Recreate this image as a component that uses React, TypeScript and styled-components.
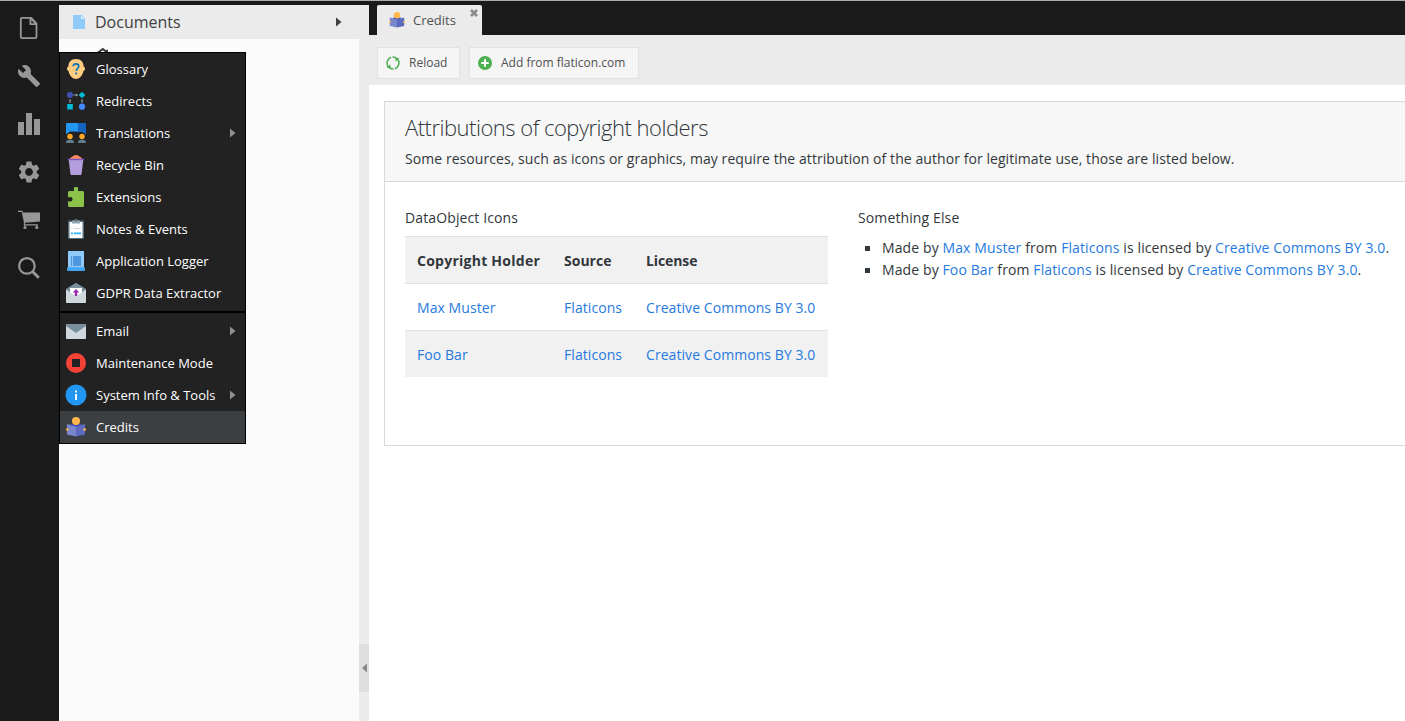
import React from 'react';
import styled, { createGlobalStyle } from 'styled-components';
import { MdSettings, MdBuild } from 'react-icons/md';

const GlobalStyle = createGlobalStyle`
  * { box-sizing: border-box; }
  html, body { margin: 0; padding: 0; overflow: hidden; }
  body { font-family: 'Open Sans', 'Noto Sans', sans-serif; background: #fff; }
  svg { display: block; flex: none; }
`;

const Shell = styled.div`
  display: flex;
  width: 1405px;
  height: 721px;
  border-top: 1px solid #a9afac;
  background: #1a1a1a;
  overflow: hidden;
`;

const Rail = styled.nav`
  flex: none;
  width: 59px;
  display: flex;
  flex-direction: column;
  align-items: flex-start;
  padding-top: 3px;
  background: #1a1a1a;
`;

const RailItem = styled.div<{ $lift?: number }>`
  height: 48px;
  width: 58px;
  display: flex;
  align-items: center;
  justify-content: center;
  padding-bottom: ${(p) => p.$lift ?? 0}px;
  color: #979797;
`;

const TreePanel = styled.aside`
  position: relative;
  flex: none;
  width: 310px;
  display: flex;
  flex-direction: column;
  padding-top: 4px;
`;

const TreeHeader = styled.header`
  height: 34px;
  display: flex;
  align-items: center;
  padding: 0 27px 0 13px;
  background: #ebebeb;
  color: #404040;
  font-size: 16px;
`;

const TreeTitle = styled.span`
  flex: 1;
  margin-left: 9px;
  line-height: 34px;
`;

const TreeRow = styled.div`
  flex: 1;
  display: flex;
`;

const TreeBody = styled.div`
  flex: 1;
  padding: 8px 0 0 36px;
  background: #fbfbfb;
`;

const Splitter = styled.div`
  width: 10px;
  padding-top: 605px;
  background: #ebebeb;
`;

const SplitHandle = styled.div`
  height: 48px;
  display: flex;
  align-items: center;
  padding-left: 3px;
  background: #dedede;
`;

const Menu = styled.div`
  position: absolute;
  left: 0;
  top: 51px;
  width: 187px;
  border: 1px solid #000;
  background: #222;
`;

const MenuItem = styled.div<{ $active?: boolean }>`
  height: 32px;
  display: flex;
  align-items: center;
  padding: 0 9px 0 6px;
  background: ${(p) => (p.$active ? '#3c3f42' : 'transparent')};
  color: #fff;
  font-size: 13px;
`;

const MenuLabel = styled.span`
  flex: 1;
  margin-left: 10px;
  line-height: 32px;
  white-space: nowrap;
`;

const MenuDivider = styled.div`
  height: 2px;
  margin: 2px 0;
  background: #000;
`;

const Main = styled.main`
  flex: 1;
  min-width: 0;
  display: flex;
  flex-direction: column;
  background: #fff;
`;

const TabBar = styled.div`
  height: 34px;
  padding: 4px 0 0 8px;
  background: #1a1a1a;
`;

const Tab = styled.div`
  position: relative;
  width: 105px;
  height: 30px;
  display: flex;
  align-items: center;
  padding-left: 12px;
  border-radius: 2px 2px 0 0;
  background: #ebebeb;
  color: #505050;
  font-size: 13px;
`;

const TabLabel = styled.span`
  margin-left: 8px;
  line-height: 30px;
`;

const TabClose = styled.span`
  position: absolute;
  right: 4px;
  top: 4px;
`;

const Toolbar = styled.div`
  height: 50px;
  display: flex;
  gap: 9px;
  padding: 12px 8px 0;
  background: #ebebeb;
`;

const ToolButton = styled.button<{ $width: number }>`
  width: ${(p) => p.$width}px;
  height: 32px;
  display: flex;
  align-items: center;
  padding: 0 0 0 8px;
  border: 1px solid #e1e1e1;
  background: #f5f5f5;
  color: #505050;
  font: 12px/30px 'Open Sans', sans-serif;
  white-space: nowrap;
`;

const ToolLabel = styled.span`
  margin-left: 9px;
`;

const Card = styled.section`
  height: 345px;
  margin: 16px 0 0 15px;
  border: 1px solid #d9d9d9;
  border-right: 0;
  color: #32373c;
  font-family: 'Open Sans', 'Noto Sans', sans-serif;
  font-size: 14px;
  letter-spacing: 0.067px;
`;

const CardHeader = styled.header`
  height: 80px;
  padding: 9px 20px 0;
  border-bottom: 1px solid #d9d9d9;
  background: #f7f7f7;
`;

const Title = styled.h1`
  margin: 0;
  font-size: 22px;
  font-weight: 300;
  line-height: 32px;
  letter-spacing: -0.5px;
`;

const Lead = styled.p`
  margin: 5px 0 0;
  line-height: 22px;
  white-space: nowrap;
`;

const Columns = styled.div`
  display: flex;
  gap: 30px;
  padding: 25px 0 0 20px;
`;

const Heading = styled.h2`
  margin: 0;
  font-size: 14px;
  font-weight: 400;
  line-height: 22px;
  letter-spacing: 0.12px;
`;

const Table = styled.div`
  width: 423px;
  margin-top: 7px;
`;

const Row = styled.div<{ $shade?: boolean; $bold?: boolean }>`
  height: 47px;
  display: grid;
  grid-template-columns: 147px 82px 1fr;
  padding-left: 12px;
  border-top: 1px solid #dee2e6;
  background: ${(p) => (p.$shade ? '#f1f1f1' : '#fff')};
  font-weight: ${(p) => (p.$bold ? 700 : 400)};
  line-height: 47px;
  white-space: nowrap;
`;

const HeadCell = styled.span<{ $track: number }>`
  letter-spacing: ${(p) => p.$track}px;
`;

const Link = styled.a`
  color: #267ae0;
`;

const List = styled.ul`
  margin: 7px 0 0;
  padding: 0;
  list-style: none;
  letter-spacing: 0.11px;
`;

const ListItem = styled.li`
  display: flex;
  align-items: center;
  height: 22px;
  white-space: pre;
`;

const Bullet = styled.span`
  width: 5px;
  height: 5px;
  margin: 3px 12px 0 7px;
  background: #32373c;
`;

const CaretRight = ({ color }: { color: string }) => (
  <svg width="6" height="10" viewBox="0 0 6 10"><path d="M0 0.5L5.5 5L0 9.5z" fill={color} /></svg>
);

const FileIcon = () => (
  <svg width="20" height="24" viewBox="0 0 20 24" fill="none" stroke="currentColor" strokeWidth="1.8">
    <path d="M3 1.9h9.2l5.3 5.6v13.4a1.2 1.2 0 0 1-1.2 1.2H3a1.2 1.2 0 0 1-1.2-1.2V3.1A1.2 1.2 0 0 1 3 1.9z" />
    <path d="M11.4 2v6.2h6.2M11.5 2l6 6.2" />
  </svg>
);

const ChartIcon = () => (
  <svg width="22" height="22" viewBox="0 0 22 22" fill="currentColor">
    <path d="M0 9h6v13H0zM8 0h6v22H8zM16 6h6v16h-6z" />
  </svg>
);

const CartIcon = () => (
  <svg width="22" height="20" viewBox="0 0 22 20" fill="currentColor">
    <path d="M4.5 2.4H22v9L7 12.7v1.6h13v1.2H5.8V11.8L3.7 2H0V.7h4.7z" />
    <path d="M6.8 15v1.5M19 15v1.5" stroke="currentColor" />
    <circle cx="7" cy="17.5" r="1.6" /><circle cx="18.8" cy="17.5" r="1.6" />
  </svg>
);

const SearchIcon = () => (
  <svg width="22" height="22" viewBox="0 0 22 22" fill="none" stroke="currentColor">
    <circle cx="8.9" cy="8.9" r="7.8" strokeWidth="2.2" />
    <path d="M14.5 14.5l6.3 6.3" strokeWidth="3" />
  </svg>
);

const DocIcon = () => (
  <svg width="14" height="16" viewBox="0 0 14 16">
    <path d="M1 1h8.500L13 4.500V15H1z" fill="#90caf9" /><path d="M9 1.700V5h3.300z" fill="#e1f5fe" />
  </svg>
);

const HomeTip = () => (
  <svg width="16" height="12" viewBox="0 0 16 12" fill="none" stroke="#333" strokeWidth="1.8">
    <path d="M2.500 6L7.800 2l5.500 4.500M12 2.800v3.500" />
  </svg>
);

const ReadIcon = ({ size }: { size: number }) => (
  <svg width={size} height={size} viewBox="0 0 20 20">
    <path d="M1 7l9 2.300v10.200L1 17.400z" fill="#7986cb" />
    <path d="M19 7l-9 2.300v10.200l9-2.100z" fill="#5c6bc0" />
    <path d="M5 7h10v1.200l-5 1.500-5-1.500z" fill="#3f51b5" />
    <circle cx="10" cy="4" r="4" fill="#ffb74d" />
    <circle cx="1.300" cy="12.600" r="1.300" fill="#ffb74d" /><circle cx="18.700" cy="12.600" r="1.300" fill="#ffb74d" />
  </svg>
);

const icon = (children: React.ReactNode) => (
  <svg width="20" height="20" viewBox="0 0 20 20">{children}</svg>
);

const GlossaryIcon = icon(<>
  <path d="M10 0c5 0 7.700 3.200 7.700 7.800.8.1 1.300.7 1.300 1.700 0 1.400-.6 2.300-1.600 2.600C16.700 16.200 14 20 10 20s-6.700-3.800-7.400-7.900C1.600 11.800 1 10.900 1 9.500c0-1 .5-1.600 1.300-1.700C2.300 3.200 5 0 10 0z" fill="#ffcc80" />
  <path d="M7.200 7.300C7.300 5.600 8.500 4.900 10 4.900c1.700 0 2.800.9 2.800 2.400 0 1.900-2.500 2.100-2.500 4.600" fill="none" stroke="#0277bd" strokeWidth="1.700" />
  <path d="M9.300 13.500h1.900v1.900H9.300z" fill="#0277bd" />
</>);

const RedirectIcon = icon(<>
  <path d="M7.500 4h3.500M4 10.500V12M16 10.500V12" stroke="#90a4ae" />
  <path d="M10 2.500L12.200 4 10 5.500zM2.700 10.300L4 8l1.300 2.300zM14.700 10.300L16 8l1.300 2.300z" fill="#90a4ae" />
  <circle cx="4" cy="4" r="3" fill="#3f51b5" />
  <path d="M16 .7L19.300 4 16 7.300 12.700 4z" fill="#00bcd4" />
  <path d="M1.200 13h5.600v5.500H1.200z" fill="#00bcd4" />
  <circle cx="16" cy="15.700" r="3.100" fill="#448aff" />
</>);

const TranslationIcon = icon(<>
  <path d="M10 0h9a1 1 0 0 1 1 1v10.500L16.500 9H10z" fill="#1565c0" />
  <path d="M1 0h10a1 1 0 0 1 1 1v6.500a1 1 0 0 1-1 1H4L0 11.500V1a1 1 0 0 1 1-1z" fill="#2196f3" />
  <circle cx="4" cy="13.500" r="2.700" fill="#ffa726" /><circle cx="16" cy="13.500" r="2.700" fill="#ffa726" />
  <path d="M0 20c0-3 2-3.200 4-3.200S8 17 8 20zM12 20c0-3 2-3.200 4-3.200s4 .2 4 3.200z" fill="#607d8b" />
</>);

const BinIcon = icon(<>
  <path d="M4 4.200c0-2 2-1.400 2.600-2.600C7.500 0 9 1 10 0c1.500-.3 2 .8 3.200 1.300 1 .5 2.800.9 2.800 2.900z" fill="#ff8a65" />
  <path d="M2.700 5h14.600L15.500 19.300a1 1 0 0 1-1 .7h-9a1 1 0 0 1-1-.7z" fill="#b39ddb" />
  <path d="M2 3.700h16v1.500H2z" fill="#7e57c2" />
</>);

const PuzzleIcon = icon(
  <path d="M2 5.500A1.500 1.500 0 0 1 3.500 4h4.300c.6-.6 0-1.100 0-2a2.200 2.200 0 0 1 4.400 0c0 .9-.6 1.400 0 2h4.300A1.500 1.500 0 0 1 18 5.500v13a1.500 1.500 0 0 1-1.500 1.500h-13A1.500 1.500 0 0 1 2 18.500v-4c.6-.6 1.200 0 2.300 0a2.300 2.300 0 0 0 0-4.600c-1.100 0-1.700.6-2.300 0z" fill="#8bc34a" />
);

const NotesIcon = icon(<>
  <rect x="2" y="1.500" width="16" height="18.500" rx="1.300" fill="#546e7a" />
  <path d="M3.500 3h13v16h-13z" fill="#fff" />
  <path d="M6 1.500h2.200a1.900 1.900 0 0 1 3.600 0H14v3H6z" fill="#90a4ae" /><circle cx="10" cy="1.600" r=".8" fill="#37474f" />
  <path d="M5 9h1.500v1H5zM8 9h7v1H8z" fill="#cfd8dc" /><path d="M5 13.500h2v1.700H5zM8 13.500h7v1.700H8z" fill="#29b6f6" />
</>);

const LoggerIcon = icon(<>
  <path d="M2 0h16v17H2z" fill="#90caf9" />
  <path d="M5 5h1v10H5zM7 5h8v10H7z" fill="#4f97df" />
  <rect x="1" y="16.200" width="18" height="3.800" rx="1" fill="#42a5f5" />
</>);

const ExtractIcon = icon(<>
  <path d="M0 6L10-.2 20 6v4H0z" fill="#78909c" />
  <path d="M4 5h12v9H4z" fill="#fff" />
  <path d="M0 6.500l10 7 10-7V19a1 1 0 0 1-1 1H1a1 1 0 0 1-1-1z" fill="#cfd8dc" />
  <path d="M10 6l3.200 3.500h-2V13H8.800V9.500h-2z" fill="#9c27b0" />
</>);

const MailIcon = icon(<>
  <rect x="0" y="3" width="20" height="15" rx="1" fill="#cfd8dc" />
  <path d="M0 4a1 1 0 0 1 1-1h18a1 1 0 0 1 1 1v1l-10 7L0 5z" fill="#78909c" />
</>);

const StopIcon = icon(<>
  <circle cx="10" cy="10" r="10" fill="#f44336" /><rect x="6" y="6" width="8" height="8" rx=".5" fill="#222" />
</>);

const WideIcon = styled.svg`
  margin: 0 -1px;
`;

const InfoIcon = (
  <WideIcon width="22" height="22" viewBox="-1 -1 22 22">
    <circle cx="10" cy="10" r="10.500" fill="#2196f3" /><path d="M9.100 9h1.900v6H9.100zM9.100 5.500h1.900v1.900H9.100z" fill="#fff" />
  </WideIcon>
);

const ReloadIcon = () => (
  <svg width="14" height="14" viewBox="0 0 14 14" fill="none" stroke="#4caf50" strokeWidth="1.500">
    <path d="M5.200 1.300A6 6 0 0 0 2.600 11M8.800 12.700A6 6 0 0 0 11.400 3M6.500 1A6 6 0 0 1 11 2.600M3 11.400A6 6 0 0 0 7.500 13" />
    <path d="M.7 12h3.700V8.300zM13.300 2H9.600v3.700z" fill="#4caf50" stroke="none" />
  </svg>
);

const AddIcon = () => (
  <svg width="14" height="14" viewBox="0 0 14 14">
    <circle cx="7" cy="7" r="7" fill="#4caf50" /><path d="M6 3.300h2V6h2.700v2H8v2.700H6V8H3.300V6H6z" fill="#fff" />
  </svg>
);

type Entry = { label: string; icon: React.ReactNode; arrow?: boolean; active?: boolean };

const groupOne: Entry[] = [
  { label: 'Glossary', icon: GlossaryIcon },
  { label: 'Redirects', icon: RedirectIcon },
  { label: 'Translations', icon: TranslationIcon, arrow: true },
  { label: 'Recycle Bin', icon: BinIcon },
  { label: 'Extensions', icon: PuzzleIcon },
  { label: 'Notes & Events', icon: NotesIcon },
  { label: 'Application Logger', icon: LoggerIcon },
  { label: 'GDPR Data Extractor', icon: ExtractIcon },
];

const groupTwo: Entry[] = [
  { label: 'Email', icon: MailIcon, arrow: true },
  { label: 'Maintenance Mode', icon: StopIcon },
  { label: 'System Info & Tools', icon: InfoIcon, arrow: true },
  { label: 'Credits', icon: <ReadIcon size={20} />, active: true },
];

const MenuEntries = ({ items }: { items: Entry[] }) => (
  <>
    {items.map((m) => (
      <MenuItem key={m.label} $active={m.active}>
        {m.icon}<MenuLabel>{m.label}</MenuLabel>{m.arrow && <CaretRight color="#8f8f8f" />}
      </MenuItem>
    ))}
  </>
);

const holders = ['Max Muster', 'Foo Bar'];

export default function App() {
  return (
    <>
      <GlobalStyle />
      <Shell>
        <Rail>
          <RailItem><FileIcon /></RailItem>
          <RailItem $lift={1}><MdBuild size={24} /></RailItem>
          <RailItem><ChartIcon /></RailItem>
          <RailItem><MdSettings size={26} /></RailItem>
          <RailItem><CartIcon /></RailItem>
          <RailItem><SearchIcon /></RailItem>
        </Rail>
        <TreePanel>
          <TreeHeader>
            <DocIcon />
            <TreeTitle>Documents</TreeTitle>
            <CaretRight color="#404040" />
          </TreeHeader>
          <TreeRow>
            <TreeBody><HomeTip /></TreeBody>
            <Splitter>
              <SplitHandle>
                <svg width="5" height="10" viewBox="0 0 5 10"><path d="M5 .5v9L0 5z" fill="#888" /></svg>
              </SplitHandle>
            </Splitter>
          </TreeRow>
          <Menu>
            <MenuEntries items={groupOne} />
            <MenuDivider />
            <MenuEntries items={groupTwo} />
          </Menu>
        </TreePanel>
        <Main>
          <TabBar>
            <Tab>
              <ReadIcon size={16} />
              <TabLabel>Credits</TabLabel>
              <TabClose>
                <svg width="8" height="8" viewBox="0 0 8 8" stroke="#8a8a8a" strokeWidth="2.600"><path d="M1 1l6 6M7 1L1 7" /></svg>
              </TabClose>
            </Tab>
          </TabBar>
          <Toolbar>
            <ToolButton $width={83}><ReloadIcon /><ToolLabel>Reload</ToolLabel></ToolButton>
            <ToolButton $width={170}><AddIcon /><ToolLabel>Add from flaticon.com</ToolLabel></ToolButton>
          </Toolbar>
          <Card>
            <CardHeader>
              <Title>Attributions of copyright holders</Title>
              <Lead>Some resources, such as icons or graphics, may require the attribution of the author for legitimate use, those are listed below.</Lead>
            </CardHeader>
            <Columns>
              <div>
                <Heading>DataObject Icons</Heading>
                <Table>
                  <Row $shade $bold>
                    <HeadCell $track={0.25}>Copyright Holder</HeadCell>
                    <HeadCell $track={0}>Source</HeadCell>
                    <HeadCell $track={-0.1}>License</HeadCell>
                  </Row>
                  {holders.map((name, i) => (
                    <Row key={name} $shade={i === 1}>
                      <Link>{name}</Link><Link>Flaticons</Link><Link>Creative Commons BY 3.0</Link>
                    </Row>
                  ))}
                </Table>
              </div>
              <div>
                <Heading>Something Else</Heading>
                <List>
                  {holders.map((name) => (
                    <ListItem key={name}>
                      <Bullet />
                      <span>Made by <Link>{name}</Link> from <Link>Flaticons</Link> is licensed by <Link>Creative Commons BY 3.0</Link>.</span>
                    </ListItem>
                  ))}
                </List>
              </div>
            </Columns>
          </Card>
        </Main>
      </Shell>
    </>
  );
}
